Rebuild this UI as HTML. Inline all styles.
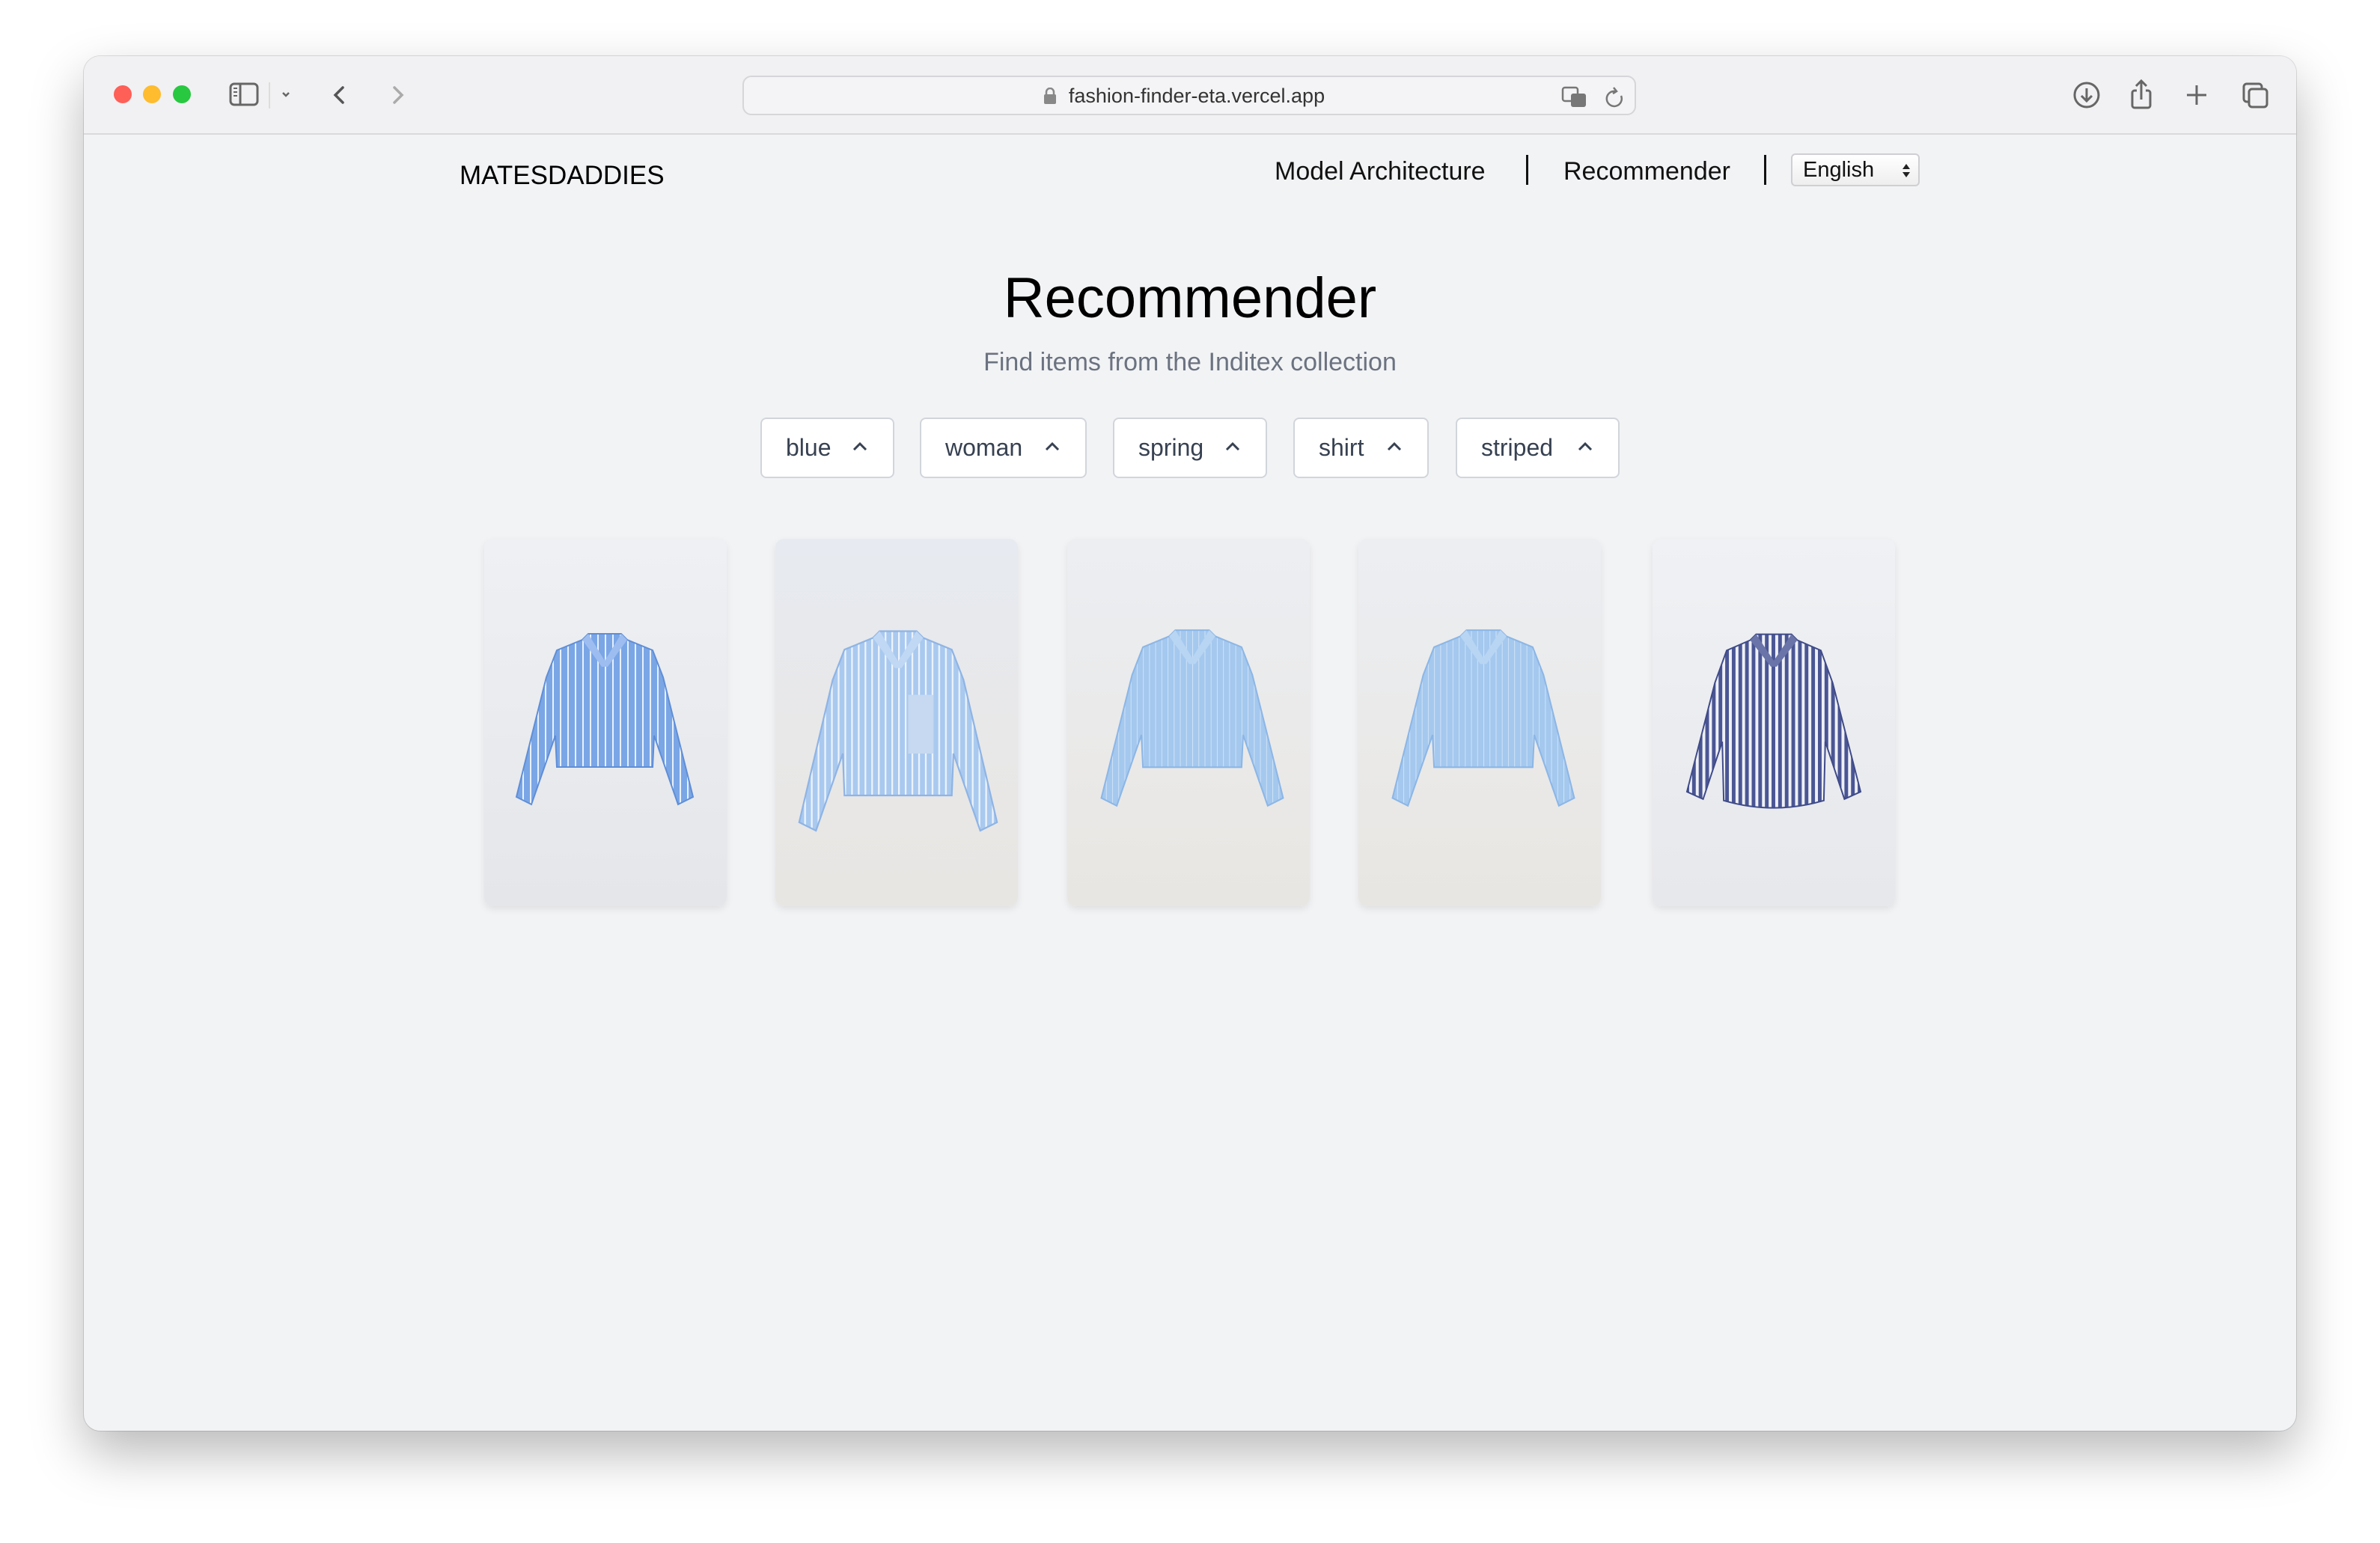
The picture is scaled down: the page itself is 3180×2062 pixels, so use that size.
<!DOCTYPE html>
<html><head><meta charset="utf-8"><style>
*{margin:0;padding:0;box-sizing:border-box}
body{width:3180px;height:2062px;background:#fff;font-family:"Liberation Sans",sans-serif;position:relative;overflow:hidden}
.win{position:absolute;left:112px;top:75px;width:2956px;height:1837px;border-radius:22px;background:#f2f3f5;box-shadow:0 30px 70px rgba(0,0,0,.28),0 0 0 1px rgba(0,0,0,.12);overflow:hidden}
.tb{position:absolute;left:0;top:0;width:100%;height:105px;background:#f1f1f3;border-bottom:2px solid #d9d9dc}
.dot{position:absolute;top:39px;width:24px;height:24px;border-radius:50%}
.addr{position:absolute;left:880px;top:26px;width:1194px;height:53px;border:2px solid #d6d6d9;border-radius:12px;background:#f4f4f6}
.abs{position:absolute}
.nav{position:absolute;font-size:34px;color:#111}
.chip{position:absolute;top:483px;height:81px;background:#fff;border:2px solid #d1d5db;border-radius:8px;font-size:32px;color:#374151;padding-left:32px;line-height:77px}
.chip svg{position:absolute;right:34px;top:30px}
.card{position:absolute;top:645px;width:324px;height:491px;border-radius:12px;box-shadow:0 4px 10px rgba(0,0,0,.08);overflow:hidden}
.card svg{position:absolute}
</style></head><body>
<div class="win">
 <div class="tb">
  <div class="dot" style="left:40px;background:#fe5f57"></div>
  <div class="dot" style="left:79px;background:#febc2e"></div>
  <div class="dot" style="left:119px;background:#28c840"></div>
  <svg class="abs" style="left:190px;top:30px" width="260" height="46" viewBox="0 0 260 46">
   <rect x="6" y="7" width="36" height="28" rx="5" fill="none" stroke="#666" stroke-width="3"/>
   <line x1="19" y1="7" x2="19" y2="35" stroke="#666" stroke-width="3"/>
   <line x1="10" y1="13" x2="15" y2="13" stroke="#666" stroke-width="2"/><line x1="10" y1="18" x2="15" y2="18" stroke="#666" stroke-width="2"/><line x1="10" y1="23" x2="15" y2="23" stroke="#666" stroke-width="2"/>
   <line x1="58" y1="5" x2="58" y2="40" stroke="#ddd" stroke-width="2"/>
   <path d="M76 19 L80 23 L84 19" fill="none" stroke="#666" stroke-width="2.5"/>
   <path d="M156 12 L146 22 L156 32" fill="none" stroke="#555" stroke-width="3.5" stroke-linecap="round"/>
   <path d="M225 12 L235 22 L225 32" fill="none" stroke="#aaa" stroke-width="3.5" stroke-linecap="round"/>
  </svg>
  <div class="addr">
   <svg class="abs" style="left:400px;top:14px" width="18" height="24"><rect x="1" y="9" width="16" height="13" rx="2" fill="#888"/><path d="M4 10 V6 a5 5 0 0 1 10 0 V10" fill="none" stroke="#888" stroke-width="2.5"/></svg>
   <div class="abs" style="left:0;width:100%;top:10px;text-align:center;font-size:27px;color:#333;padding-left:20px">fashion-finder-eta.vercel.app</div>
   <svg class="abs" style="left:1092px;top:10px" width="90" height="34"><rect x="2" y="4" width="20" height="18" rx="3" fill="none" stroke="#777" stroke-width="2.5"/><rect x="13" y="12" width="20" height="18" rx="3" fill="#777"/><path d="M72 9 a10 10 0 1 0 8 6" fill="none" stroke="#777" stroke-width="2.5"/><path d="M70 4 l4 5 l-5 3" fill="none" stroke="#777" stroke-width="2.5"/></svg>
  </div>
  <svg class="abs" style="left:2650px;top:28px" width="300" height="50" viewBox="0 0 300 50">
   <circle cx="26" cy="24" r="16" fill="none" stroke="#666" stroke-width="3"/><path d="M26 15 V32 M19 25 L26 32 L33 25" fill="none" stroke="#666" stroke-width="3"/>
   <path d="M93 18 H90 a3 3 0 0 0 -3 3 V38 a3 3 0 0 0 3 3 H108 a3 3 0 0 0 3 -3 V21 a3 3 0 0 0 -3 -3 H105 M99 30 V5 M92 12 L99 5 L106 12" fill="none" stroke="#666" stroke-width="3"/>
   <path d="M173 11 V37 M160 24 H186" stroke="#666" stroke-width="3"/>
   <rect x="236" y="9" width="24" height="24" rx="4" fill="none" stroke="#666" stroke-width="3"/><rect x="243" y="16" width="24" height="24" rx="4" fill="#f1f1f3" stroke="#666" stroke-width="3"/>
  </svg>
 </div>
 <div class="nav" style="left:502px;top:140px;font-size:35px;color:#000">MATESDADDIES</div>
 <div class="nav" style="left:1591px;top:135px">Model Architecture</div>
 <div class="abs" style="left:1927px;top:132px;width:3px;height:40px;background:#111"></div>
 <div class="nav" style="left:1977px;top:135px">Recommender</div>
 <div class="abs" style="left:2245px;top:132px;width:3px;height:40px;background:#111"></div>
 <div class="abs" style="left:2281px;top:130px;width:172px;height:44px;border:2px solid #cfcfd3;border-radius:6px;background:linear-gradient(#fff,#eee);font-size:29px;line-height:40px;padding-left:14px;color:#111">English<svg class="abs" style="right:10px;top:9px" width="12" height="24"><path d="M1 10 L6 3 L11 10Z M1 14 L6 21 L11 14Z" fill="#222"/></svg></div>
 <div class="abs" style="left:0;width:100%;top:280px;text-align:center;font-size:76px;color:#000">Recommender</div>
 <div class="abs" style="left:0;width:100%;top:390px;text-align:center;font-size:34px;color:#6b7280">Find items from the Inditex collection</div>
 <div class="chip" style="left:904px;width:179px">blue<svg width="20" height="14"><path d="M2 11 L10 3 L18 11" fill="none" stroke="#374151" stroke-width="3"/></svg></div>
 <div class="chip" style="left:1117px;width:223px">woman<svg width="20" height="14"><path d="M2 11 L10 3 L18 11" fill="none" stroke="#374151" stroke-width="3"/></svg></div>
 <div class="chip" style="left:1375px;width:206px">spring<svg width="20" height="14"><path d="M2 11 L10 3 L18 11" fill="none" stroke="#374151" stroke-width="3"/></svg></div>
 <div class="chip" style="left:1616px;width:181px">shirt<svg width="20" height="14"><path d="M2 11 L10 3 L18 11" fill="none" stroke="#374151" stroke-width="3"/></svg></div>
 <div class="chip" style="left:1833px;width:219px">striped<svg width="20" height="14"><path d="M2 11 L10 3 L18 11" fill="none" stroke="#374151" stroke-width="3"/></svg></div>

 <svg width="0" height="0" style="position:absolute">
  <defs>
   <pattern id="p1" width="10" height="10" patternUnits="userSpaceOnUse"><rect width="10" height="10" fill="#7aa6e6"/><rect width="2" height="10" fill="#e8f0fb"/></pattern>
   <pattern id="p2" width="8" height="8" patternUnits="userSpaceOnUse"><rect width="8" height="8" fill="#a9c9ef"/><rect width="2" height="8" fill="#eef4fc"/></pattern>
   <pattern id="p3" width="8" height="8" patternUnits="userSpaceOnUse"><rect width="8" height="8" fill="#a4c8ee"/><rect width="1" height="8" fill="#cfe2f7"/></pattern>
   <pattern id="p5" width="9" height="9" patternUnits="userSpaceOnUse"><rect width="9" height="9" fill="#eef0f6"/><rect width="5" height="9" fill="#4a5694"/></pattern>
  </defs>
 </svg>

 <div class="card" style="left:535px;background:linear-gradient(#eef0f4,#e4e6ea)">
  <svg style="left:41px;top:123px" width="240" height="240" viewBox="0 0 240 240"><path d="M98 4 H142 L150 12 L184 26 L198 62 L238 222 L218 232 L186 140 L184 182 L56 182 L54 140 L22 232 L2 222 L42 62 L56 26 L90 12 Z" fill="url(#p1)" stroke="#5f8ed6" stroke-width="2"/><path d="M98 4 L120 40 L142 4 L150 12 L124 48 L116 48 L90 12Z" fill="#9dbdf0"/></svg>
 </div>
 <div class="card" style="left:924px;background:linear-gradient(#e7eaf0,#e8e6e2)">
  <svg style="left:28px;top:119px" width="272" height="280" viewBox="0 0 240 250"><path d="M98 4 H142 L150 12 L184 26 L198 62 L238 232 L218 242 L186 150 L184 200 L56 200 L54 150 L22 242 L2 232 L42 62 L56 26 L90 12 Z" fill="url(#p2)" stroke="#8fb4e4" stroke-width="2"/><path d="M98 4 L120 40 L142 4 L150 12 L124 48 L116 48 L90 12Z" fill="#c0d8f4"/><rect x="132" y="80" width="30" height="70" fill="#c6d9f0"/></svg>
 </div>
 <div class="card" style="left:1314px;background:linear-gradient(#eceef2,#e8e6e2)">
  <svg style="left:39px;top:118px" width="256" height="247" viewBox="0 0 240 240"><path d="M98 4 H142 L150 12 L184 26 L198 62 L238 222 L218 232 L186 140 L184 182 L56 182 L54 140 L22 232 L2 222 L42 62 L56 26 L90 12 Z" fill="url(#p3)" stroke="#8cb6e6" stroke-width="2"/><path d="M98 4 L120 40 L142 4 L150 12 L124 48 L116 48 L90 12Z" fill="#b8d5f3"/></svg>
 </div>
 <div class="card" style="left:1703px;background:linear-gradient(#eceef2,#e8e6e2)">
  <svg style="left:39px;top:118px" width="256" height="247" viewBox="0 0 240 240"><path d="M98 4 H142 L150 12 L184 26 L198 62 L238 222 L218 232 L186 140 L184 182 L56 182 L54 140 L22 232 L2 222 L42 62 L56 26 L90 12 Z" fill="url(#p3)" stroke="#8cb6e6" stroke-width="2"/><path d="M98 4 L120 40 L142 4 L150 12 L124 48 L116 48 L90 12Z" fill="#b8d5f3"/></svg>
 </div>
 <div class="card" style="left:2096px;background:linear-gradient(#eff1f4,#e6e8ec)">
  <svg style="left:44px;top:123px" width="236" height="257" viewBox="0 0 240 260"><path d="M96 4 H144 L152 12 L184 26 L200 70 L238 218 L216 228 L190 150 L188 230 Q120 250 52 230 L50 150 L24 228 L2 218 L40 70 L56 26 L88 12 Z" fill="url(#p5)" stroke="#3e4a88" stroke-width="2"/><path d="M96 4 L120 40 L144 4 L152 12 L124 48 L116 48 L88 12Z" fill="#6a74a8"/></svg>
 </div>
</div>
</body></html>
